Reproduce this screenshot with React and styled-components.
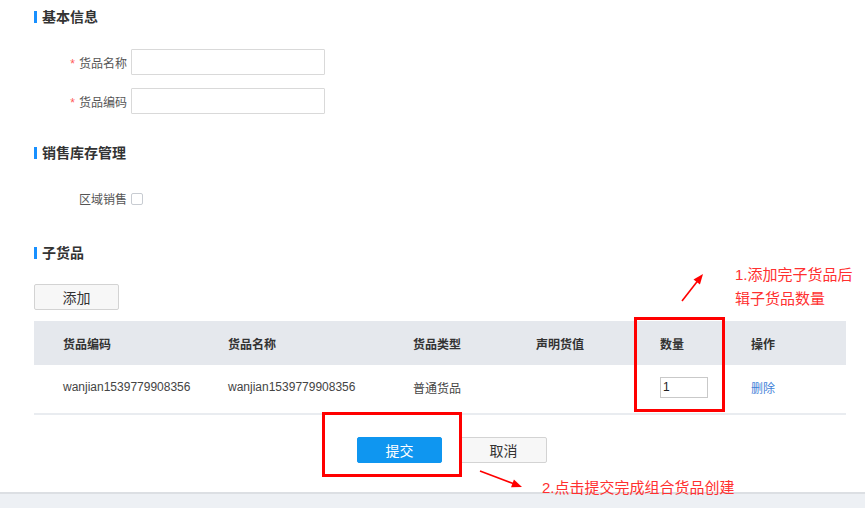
import React from 'react';
import styled, { createGlobalStyle } from 'styled-components';

const GlobalStyle = createGlobalStyle`
  html, body {
    margin: 0;
    padding: 0;
    background: #fff;
  }
  body {
    font-family: "Liberation Sans", "Noto Sans CJK SC", sans-serif;
    font-size: 12px;
    color: #333;
  }
  * {
    box-sizing: border-box;
  }
`;

const Page = styled.div`
  position: relative;
  width: 865px;
  height: 508px;
  overflow: hidden;
  display: flex;
  flex-direction: column;
`;

const Content = styled.div`
  flex: 1;
  padding: 7px 19px 0 34px;
  display: flex;
  flex-direction: column;
`;

const Footer = styled.div`
  height: 16px;
  background: #edf0f4;
  border-top: 2px solid #dcdfe3;
`;

const SectionTitle = styled.h3`
  margin: ${(p) => p.$top || 0}px 0 0;
  height: 20px;
  line-height: 20px;
  font-size: 14px;
  font-weight: bold;
  color: #333;
  display: flex;
  align-items: center;

  &::before {
    content: '';
    width: 3px;
    height: 12px;
    background: #1890ff;
    margin-right: 5px;
  }
`;

const FormRow = styled.div`
  display: flex;
  align-items: center;
  height: 26px;
  margin-top: ${(p) => p.$top}px;
`;

const Label = styled.label`
  width: 93px;
  margin-right: 4px;
  text-align: right;
  font-size: 12px;
  color: #555;

  span {
    color: #ff5a5a;
    margin-right: 4px;
  }
`;

const TextInput = styled.input`
  width: 194px;
  height: 26px;
  border: 1px solid #d9d9d9;
  border-radius: 1px;
  outline: none;
  padding: 0 6px;
  font: inherit;
`;

const Checkbox = styled.span`
  width: 12px;
  height: 12px;
  border: 1px solid #c8ccd2;
  border-radius: 2px;
  background: #fff;
  margin-top: 1px;
`;

const Button = styled.button`
  width: ${(p) => p.$width || 85}px;
  height: 26px;
  border-radius: 2px;
  font-family: "Liberation Sans", "Noto Sans CJK SC", sans-serif;
  font-size: 14px;
  cursor: pointer;
  border: 1px solid ${(p) => (p.$primary ? '#0f96f0' : '#d3d3d3')};
  background: ${(p) => (p.$primary ? '#0f96f0' : '#f7f7f7')};
  color: ${(p) => (p.$primary ? '#fff' : '#333')};
  padding: 0;
`;

const AddButton = styled(Button)`
  margin-top: 21px;
  align-self: flex-start;
`;

const Table = styled.div`
  margin-top: 11px;
  width: 812px;
  border-bottom: 2px solid #e9ecf0;
`;

const TableRow = styled.div`
  display: grid;
  grid-template-columns: 165px 185px 123px 124px 91px 1fr;
  align-items: center;
  padding-left: 29px;
  height: ${(p) => (p.$head ? 44 : 48)}px;
  background: ${(p) => (p.$head ? '#e5e8ed' : '#fff')};
  font-weight: ${(p) => (p.$head ? 'bold' : 'normal')};
  color: ${(p) => (p.$head ? '#333' : '#444')};
  font-size: 12px;
`;

const Cell = styled.div`
  white-space: nowrap;
  padding-bottom: ${(p) => (p.$head ? 0 : 4)}px;
`;

const QtyInput = styled.input`
  width: 48px;
  height: 21px;
  border: 1px solid #c9c9c9;
  outline: none;
  padding: 0 2px;
  font: inherit;
  color: #222;
`;

const Link = styled.a`
  color: #3f7fd8;
  cursor: pointer;
`;

const Actions = styled.div`
  margin-top: 22px;
  display: flex;
  gap: 18px;
  padding-left: 323px;
`;

const RedBox = styled.div`
  position: absolute;
  border: 3px solid #ff0000;
  left: ${(p) => p.$x}px;
  top: ${(p) => p.$y}px;
  width: ${(p) => p.$w}px;
  height: ${(p) => p.$h}px;
  pointer-events: none;
`;

const Note = styled.div`
  position: absolute;
  left: ${(p) => p.$x}px;
  top: ${(p) => p.$y}px;
  color: #ff3030;
  font-family: "Liberation Sans", "Noto Sans CJK SC", sans-serif;
  font-size: 15px;
  line-height: 24px;
  white-space: nowrap;
`;

const ArrowSvg = styled.svg`
  position: absolute;
  left: 0;
  top: 0;
  pointer-events: none;
`;

const Arrow = ({ x1, y1, x2, y2 }) => {
  const angle = Math.atan2(y2 - y1, x2 - x1);
  const len = 11;
  const spread = 0.38;
  const ax = x2 - len * Math.cos(angle - spread);
  const ay = y2 - len * Math.sin(angle - spread);
  const bx = x2 - len * Math.cos(angle + spread);
  const by = y2 - len * Math.sin(angle + spread);
  const mx = x2 - len * 0.8 * Math.cos(angle);
  const my = y2 - len * 0.8 * Math.sin(angle);
  return (
    <g>
      <line x1={x1} y1={y1} x2={mx} y2={my} stroke="#ff0000" strokeWidth="1.6" />
      <polygon points={`${x2},${y2} ${ax},${ay} ${bx},${by}`} fill="#ff0000" />
    </g>
  );
};

const columns = ['货品编码', '货品名称', '货品类型', '声明货值', '数量', '操作'];

export default function App() {
  return (
    <Page>
      <GlobalStyle />
      <Content>
        <SectionTitle>基本信息</SectionTitle>
        <FormRow $top={22}>
          <Label><span>*</span>货品名称</Label>
          <TextInput />
        </FormRow>
        <FormRow $top={13}>
          <Label><span>*</span>货品编码</Label>
          <TextInput />
        </FormRow>

        <SectionTitle $top={29}>销售库存管理</SectionTitle>
        <FormRow $top={22}>
          <Label>区域销售</Label>
          <Checkbox />
        </FormRow>

        <SectionTitle $top={32}>子货品</SectionTitle>
        <AddButton>添加</AddButton>

        <Table>
          <TableRow $head>
            {columns.map((c) => (
              <Cell $head key={c}>{c}</Cell>
            ))}
          </TableRow>
          <TableRow>
            <Cell>wanjian1539779908356</Cell>
            <Cell>wanjian1539779908356</Cell>
            <Cell>普通货品</Cell>
            <Cell />
            <Cell><QtyInput defaultValue="1" /></Cell>
            <Cell><Link>删除</Link></Cell>
          </TableRow>
        </Table>

        <Actions>
          <Button $primary>提交</Button>
          <Button $width={87}>取消</Button>
        </Actions>
      </Content>
      <Footer />

      <RedBox $x={634} $y={317} $w={91} $h={95} />
      <RedBox $x={322} $y={412} $w={140} $h={65} />

      <ArrowSvg width="865" height="508">
        <Arrow x1={682} y1={301} x2={703} y2={274} />
        <Arrow x1={480} y1={471} x2={522} y2={487} />
      </ArrowSvg>

      <Note $x={735} $y={263}>
        1.添加完子货品后
        <br />
        辑子货品数量
      </Note>
      <Note $x={542} $y={476}>2.点击提交完成组合货品创建</Note>
    </Page>
  );
}
